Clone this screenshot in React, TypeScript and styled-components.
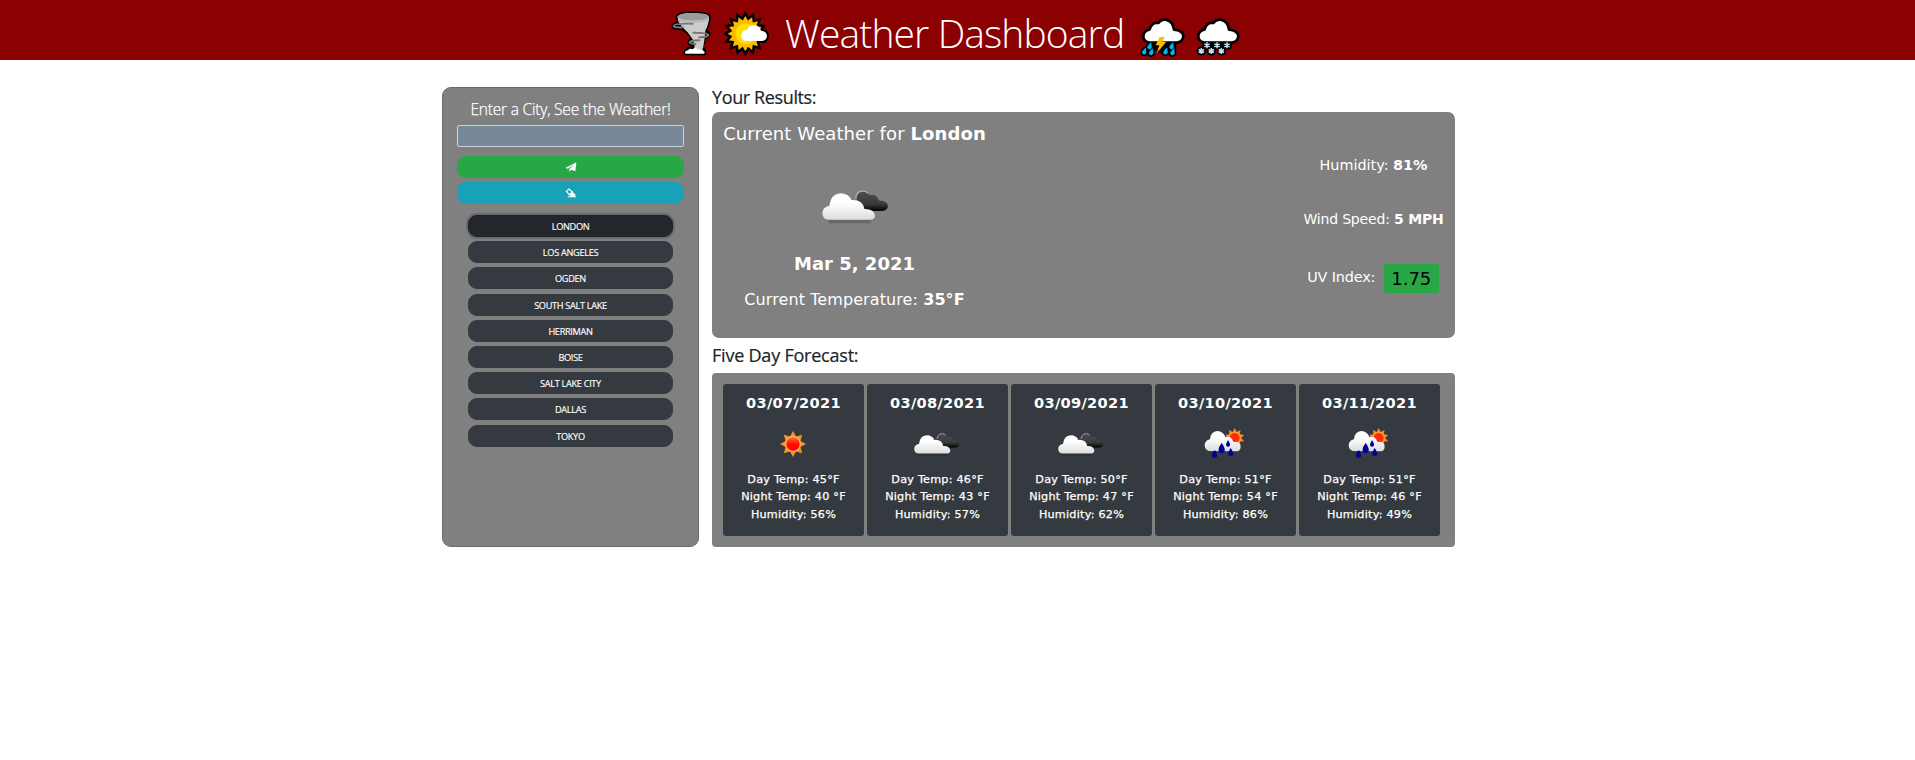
import React from "react";
import styled, { createGlobalStyle } from "styled-components";

const GlobalStyle = createGlobalStyle`
  * { box-sizing: border-box; }
  body { margin: 0; background: #fff; color: #212529; font-family: "Open Sans", "Noto Sans", sans-serif; }
  h1, h2, h3, p { margin: 0; font-weight: inherit; }
  svg { display: block; flex: none; }
`;

const verdana = `"DejaVu Sans", sans-serif`;

const Header = styled.header`
  height: 60px;
  background: #8b0000;
  display: flex;
  justify-content: center;
  padding-right: 4px;
`;

const IconPair = styled.div<{ $gap: number }>`
  display: flex;
  gap: ${(p) => p.$gap}px;
`;

const Title = styled.h1`
  font-size: 39px;
  font-weight: 300;
  letter-spacing: -0.88px;
  line-height: 66px;
  height: 60px;
  width: 338px;
  margin: 0 16px 0 15px;
  color: #fff;
  white-space: nowrap;
`;

const Main = styled.main`
  display: flex;
  gap: 13px;
  padding: 27px 0 0 442px;
`;

const SearchPanel = styled.aside`
  width: 257px;
  height: 460px;
  border: 1px solid #6b6b6b;
  border-radius: 9px;
  background: #808080;
  padding: 9px 14px 0;
`;

const SearchTitle = styled.h2`
  font-size: 15.6px;
  font-weight: 300;
  letter-spacing: -0.24px;
  line-height: 24px;
  text-align: center;
  color: #fff;
  white-space: nowrap;
  -webkit-text-stroke: 0.25px #fff;
`;

const CityInput = styled.input`
  display: block;
  width: 100%;
  height: 22px;
  margin: 4px 0 9px;
  background: #778899;
  border: 1px solid #ced4da;
  border-radius: 2px;
`;

const ActionButton = styled.button<{ $color: string }>`
  display: flex;
  align-items: center;
  justify-content: center;
  width: 100%;
  height: 22px;
  margin-bottom: 4px;
  padding: 0;
  border: 0;
  border-radius: 9px;
  background: ${(p) => p.$color};
`;

const CityList = styled.div`
  display: flex;
  flex-direction: column;
  gap: 4.2px;
  padding: 7px 11px 0;
`;

const CityButton = styled.button<{ $active?: boolean }>`
  height: 22px;
  padding: 1px 0 0;
  border: 1px solid ${(p) => (p.$active ? "#1d2124" : "#343a40")};
  border-radius: 9px;
  background: ${(p) => (p.$active ? "#23272b" : "#343a40")};
  box-shadow: ${(p) => (p.$active ? "0 0 0 2px rgba(82, 88, 93, 0.5)" : "none")};
  color: #fff;
  font: 400 9.2px/19px "Open Sans", sans-serif;
  letter-spacing: -0.32px;
  text-transform: uppercase;
  -webkit-text-stroke: 0.15px #fff;
`;

const Results = styled.section`
  width: 743px;
`;

const SectionTitle = styled.h2<{ $gap: number }>`
  font-size: 18px;
  font-weight: 500;
  letter-spacing: ${(p) => (p.$gap > 5 ? -0.22 : -0.38)}px;
  line-height: 20px;
  margin-bottom: ${(p) => p.$gap}px;
  -webkit-text-stroke: 0.2px #212529;
`;

const CurrentCard = styled.div`
  display: flex;
  justify-content: space-between;
  height: 226px;
  margin-bottom: 7px;
  padding: 10px 11px 0;
  border-radius: 7px;
  background: #808080;
  color: #fff;
  font-family: ${verdana};
`;

const Summary = styled.div`
  display: flex;
  flex-direction: column;
  align-items: center;
  width: 263px;
  white-space: nowrap;
`;

const CurrentTitle = styled.h3`
  font-size: 18px;
  letter-spacing: 0.1px;
  line-height: 24px;
  margin-bottom: 44px;
`;

const CurrentIcon = styled.div`
  padding-left: 2px;
`;

const CurrentDate = styled.p`
  font-size: 18px;
  font-weight: 700;
  line-height: 24px;
  margin: 28.5px 0 12px;
`;

const CurrentTemp = styled.p`
  font-size: 16px;
  letter-spacing: 0.09px;
  line-height: 24px;
`;

const Stats = styled.div`
  display: flex;
  flex-direction: column;
  align-items: center;
  width: 141px;
  padding-top: 33px;
  white-space: nowrap;
`;

const Stat = styled.p<{ $tight?: boolean }>`
  font-size: ${(p) => (p.$tight ? 14 : 14.4)}px;
  letter-spacing: ${(p) => (p.$tight ? -0.18 : 0)}px;
  line-height: 20px;
  margin-bottom: 34px;
`;

const UvRow = styled.div`
  display: flex;
  gap: 8.5px;
  font-size: 14.4px;
  letter-spacing: -0.15px;
  line-height: 26px;
  margin: 1px 1px 0 0;
`;

const UvBadge = styled.span`
  width: 55px;
  height: 29px;
  border-radius: 3px;
  background: #28a745;
  color: #000;
  font-size: 18px;
  letter-spacing: 0;
  line-height: 29px;
  text-align: center;
`;

const Forecast = styled.div`
  display: flex;
  gap: 3px;
  height: 174px;
  padding: 11px;
  border-radius: 4px;
  background: #808080;
`;

const DayCard = styled.article`
  width: 141px;
  height: 152px;
  padding-top: 9px;
  border-radius: 3px;
  background: #343a40;
  color: #fff;
  font-family: ${verdana};
  text-align: center;
`;

const DayDate = styled.h3`
  font-size: 14.6px;
  font-weight: 700;
  letter-spacing: 0.3px;
  line-height: 20px;
`;

const DayIcon = styled.div`
  display: flex;
  align-items: center;
  justify-content: center;
  height: 50px;
  margin: 6px 0 1.5px;
  padding-right: 1px;
`;

const DayLine = styled.p`
  font-size: 11.2px;
  letter-spacing: 0.24px;
  line-height: 17.5px;
  -webkit-text-stroke: 0.25px #fff;
`;

const star = (cx: number, cy: number, outer: number, inner: number, n: number) =>
  Array.from({ length: n * 2 }, (_, i) => {
    const r = i % 2 ? inner : outer;
    const a = (Math.PI * i) / n - Math.PI / 2;
    return `${(cx + r * Math.cos(a)).toFixed(1)},${(cy + r * Math.sin(a)).toFixed(1)}`;
  }).join(" ");

const TornadoIcon = () => (
  <svg width="42" height="60" viewBox="33 0 126 180">
    <g stroke="#000" strokeWidth="10" strokeLinejoin="round" fill="#000">
      <path d="M52 50Q56 40 98 39Q144 40 147 50Q148 68 136 92L146 99Q150 108 134 114L126 142Q135 150 133 161H77Q72 154 84 147Q98 146 96 134Q85 132 88 124Q92 119 98 118L84 98L68 86Q38 86 40 78Q44 70 56 68Z" />
    </g>
    <path d="M52 50Q56 40 98 39Q144 40 147 50Q148 68 136 92L134 114L130 140Q130 150 114 152Q98 150 104 138L98 118L84 98L64 78Q54 66 52 50Z" fill="#ccc" />
    <path d="M52 50Q56 40 98 39Q144 40 147 50Q144 60 98 62Q56 60 52 50Z" fill="#9b9b9b" />
    <path d="M54 60Q98 74 147 58" fill="none" stroke="#b4b4b4" strokeWidth="4" />
    <path d="M98 71Q42 70 41 78Q42 83 68 82M100 98Q144 98 145 105Q142 112 118 112M118 121Q88 122 89 127Q92 132 106 132" fill="none" stroke="#777" strokeWidth="6" strokeLinecap="round" />
    <path d="M76 161Q72 153 84 151Q88 143 98 148Q106 140 114 149Q130 145 130 153Q137 156 132 161Z" fill="#fff" />
  </svg>
);

const sunCloud = "M256 123Q243 120 244 105Q246 90 262 89Q268 74 284 76Q300 78 303 92Q320 94 321 108Q320 122 306 123Z";

const SunIcon = () => (
  <svg width="46" height="60" viewBox="192 0 138 180">
    <polygon points={star(256, 101, 60, 45, 16)} fill="#000" stroke="#000" strokeWidth="8" />
    <path d={sunCloud} stroke="#000" strokeWidth="12" strokeLinejoin="round" />
    <polygon points={star(256, 101, 53, 40, 16)} fill="#ffb900" />
    <circle cx="257" cy="101" r="31" fill="#ffe000" />
    <path d={sunCloud} fill="#fff" />
  </svg>
);

const BlackCloud = () => (
  <path
    d="M601 126Q584 123 585 106Q587 90 604 87Q610 64 630 68Q638 56 652 58Q674 62 677 88Q704 90 705 108Q703 124 686 127Z"
    stroke="#000"
    strokeWidth="8"
    strokeLinejoin="round"
    fill="#fff"
    transform="translate(0 1)"
  />
);

const drop = (x: number, y: number) =>
  `M${x + 4} ${y - 10}Q${x - 8} ${y} ${x - 6} ${y + 6}Q${x} ${y + 12} ${x + 5} ${y + 5}Z`;
const stormDrops = [[604, 138], [588, 154], [609, 156], [670, 138], [652, 154], [673, 156]]
  .map(([x, y]) => drop(x, y))
  .join("");

const StormIcon = () => (
  <svg width="46" height="60" viewBox="572 0 138 180">
    <path d={stormDrops} stroke="#000" strokeWidth="12" strokeLinejoin="round" />
    <path d="M598 128H684V150L640 162L618 150Z" />
    <BlackCloud />
    <path d={stormDrops} fill="#00b7f1" stroke="#00b7f1" strokeWidth="2" />
    <path d="M634 111H649L642 125H654L625 160L633 136H622Z" fill="#ffb900" />
  </svg>
);

const flakes = [[611, 136], [641, 136], [671, 136], [594, 153], [624, 153], [654, 153]];

const SnowIcon = () => (
  <svg width="46" height="60" viewBox="572 0 138 180">
    {flakes.map(([x, y]) => <circle key={`${x}-${y}`} cx={x} cy={y} r="14" />)}
    <path d="M598 128H684V146H598Z" />
    <BlackCloud />
    <path d="M600 127H682V132H600Z" />
    {flakes.map(([x, y]) => (
      <path
        key={`${x}-${y}`}
        d={`M${x} ${y - 9}V${y + 9}M${x - 8} ${y - 4.5}L${x + 8} ${y + 4.5}M${x - 8} ${y + 4.5}L${x + 8} ${y - 4.5}`}
        stroke="#bfe0f5"
        strokeWidth="4.5"
      />
    ))}
  </svg>
);

const SendIcon = () => (
  <svg width="12" height="10" viewBox="0 0 36 30">
    <path d="M34 1L1 18L9 20L27 7L13 22V29L19 23L31 28Z" fill="#fff" />
  </svg>
);

const EraserIcon = () => (
  <svg width="12" height="10" viewBox="0 0 36 30">
    <path d="M4 10L12 3L22 12L13 20Z" fill="none" stroke="#fff" strokeWidth="3.5" />
    <path d="M13 20L22 11L32 20L28 25H33V28H8V25H18Z" fill="#fff" />
  </svg>
);

const BrokenClouds = ({ width }: { width: number }) => (
  <svg width={width} height={width / 2} viewBox="0 0 200 100">
    <defs>
      <linearGradient id="white" x1="0" y1="0" x2="0" y2="1">
        <stop offset="0.35" stopColor="#fff" />
        <stop offset="1" stopColor="#dcdcdc" />
      </linearGradient>
      <linearGradient id="dark" x1="0" y1="0" x2="0" y2="1">
        <stop offset="0.2" stopColor="#484848" />
        <stop offset="0.65" stopColor="#3a3a3a" />
        <stop offset="1" stopColor="#000" />
      </linearGradient>
    </defs>
    <path d="M104 35Q100 4 122 3Q136 3 142 16Q162 10 170 31Q196 32 197 48Q195 62 180 63H130Z" fill="url(#dark)" />
    <path d="M100 26Q104 3 121 3Q132 3 138 10" fill="none" stroke="#aaa" strokeWidth="4" />
    <rect x="18" y="88" width="128" height="11" rx="5" fill="#000" fillOpacity="0.18" />
    <path d="M18 89Q1 86 1 68Q2 51 22 47Q26 12 55 10Q80 10 88 30Q122 28 127 57Q154 56 158 76Q158 87 146 89Z" fill="url(#white)" />
  </svg>
);

const ClearSky = () => (
  <svg width="26" height="26" viewBox="0 0 78 78">
    <defs>
      <linearGradient id="red" x1="0" y1="0" x2="0" y2="1">
        <stop offset="0" stopColor="#ff6a3c" />
        <stop offset="0.5" stopColor="#ff0d00" />
        <stop offset="1" stopColor="#f00" />
      </linearGradient>
    </defs>
    <polygon points={star(39, 39, 39, 24, 8)} fill="#f7941d" />
    <circle cx="39" cy="39" r="24" fill="#fbb05e" />
    <circle cx="39" cy="39" r="20" fill="url(#red)" />
  </svg>
);

const RainSun = () => (
  <svg width="42" height="32" viewBox="0 0 126 96">
    <polygon points={star(92, 30, 30, 19, 10)} fill="#f7941d" />
    <circle cx="92" cy="30" r="18" fill="#fba040" />
    <circle cx="92" cy="30" r="15" fill="#ff2a10" />
    <path d="M14 69Q2 65 2 51Q3 38 18 34Q20 10 40 9Q58 10 64 27Q84 24 88 42Q108 38 110 56Q110 68 98 70Z" fill="url(#white)" />
    <path d="M53 45Q66 62 61 72Q53 80 45 72Q40 62 53 45ZM72 36Q81 50 77 54Q72 58 67 54Q64 50 72 36ZM32 66Q42 80 39 86Q32 93 24 86Q21 80 32 66ZM80 60Q91 76 87 81Q80 87 73 81Q70 76 80 60Z" fill="#00009c" />
  </svg>
);

const cities = ["London", "Los Angeles", "Ogden", "South Salt Lake", "Herriman", "Boise", "Salt Lake City", "Dallas", "Tokyo"];

const days = [
  { date: "03/07/2021", icon: <ClearSky />, day: 45, night: 40, humidity: 56 },
  { date: "03/08/2021", icon: <BrokenClouds width={46} />, day: 46, night: 43, humidity: 57 },
  { date: "03/09/2021", icon: <BrokenClouds width={46} />, day: 50, night: 47, humidity: 62 },
  { date: "03/10/2021", icon: <RainSun />, day: 51, night: 54, humidity: 86 },
  { date: "03/11/2021", icon: <RainSun />, day: 51, night: 46, humidity: 49 },
];

export default function App() {
  return (
    <>
      <GlobalStyle />
      <Header>
        <IconPair $gap={11}>
          <TornadoIcon />
          <SunIcon />
        </IconPair>
        <Title>Weather Dashboard</Title>
        <IconPair $gap={9}>
          <StormIcon />
          <SnowIcon />
        </IconPair>
      </Header>
      <Main>
        <SearchPanel>
          <SearchTitle>Enter a City, See the Weather!</SearchTitle>
          <CityInput />
          <ActionButton $color="#28a745"><SendIcon /></ActionButton>
          <ActionButton $color="#17a2b8"><EraserIcon /></ActionButton>
          <CityList>
            {cities.map((city, i) => <CityButton key={city} $active={i === 0}>{city}</CityButton>)}
          </CityList>
        </SearchPanel>
        <Results>
          <SectionTitle $gap={5}>Your Results:</SectionTitle>
          <CurrentCard>
            <Summary>
              <CurrentTitle>Current Weather for <b>London</b></CurrentTitle>
              <CurrentIcon><BrokenClouds width={67} /></CurrentIcon>
              <CurrentDate>Mar 5, 2021</CurrentDate>
              <CurrentTemp>Current Temperature: <b>35°F</b></CurrentTemp>
            </Summary>
            <Stats>
              <Stat>Humidity: <b>81%</b></Stat>
              <Stat $tight>Wind Speed: <b>5 MPH</b></Stat>
              <UvRow>UV Index: <UvBadge>1.75</UvBadge></UvRow>
            </Stats>
          </CurrentCard>
          <SectionTitle $gap={8}>Five Day Forecast:</SectionTitle>
          <Forecast>
            {days.map((d) => (
              <DayCard key={d.date}>
                <DayDate>{d.date}</DayDate>
                <DayIcon>{d.icon}</DayIcon>
                <DayLine>Day Temp: {d.day}°F</DayLine>
                <DayLine>Night Temp: {d.night} °F</DayLine>
                <DayLine>Humidity: {d.humidity}%</DayLine>
              </DayCard>
            ))}
          </Forecast>
        </Results>
      </Main>
    </>
  );
}
